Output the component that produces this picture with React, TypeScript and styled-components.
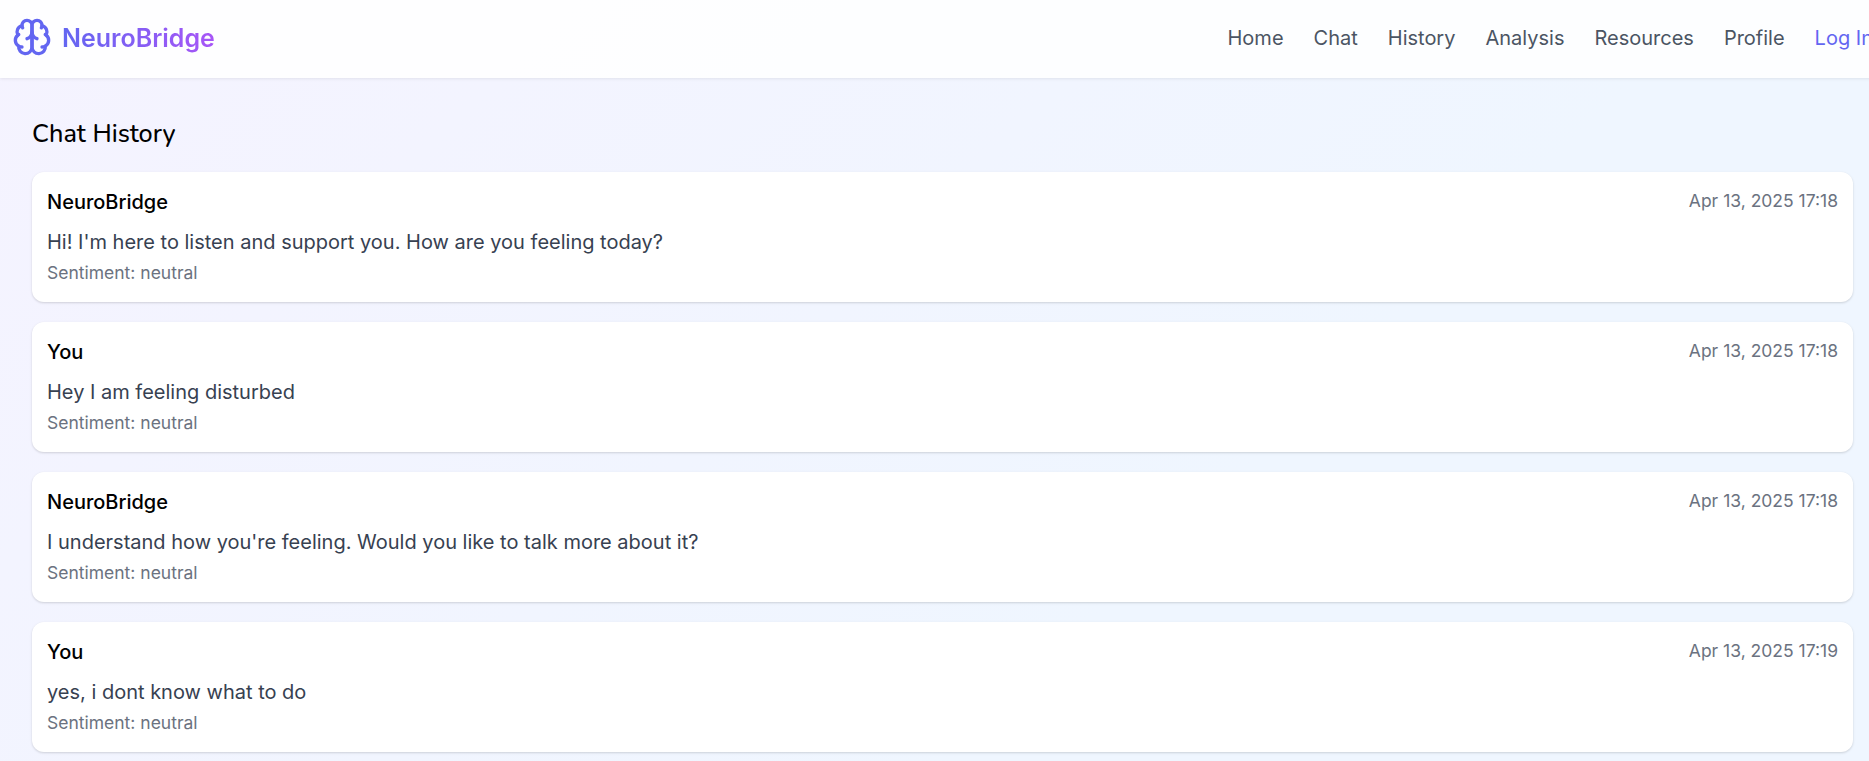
import React from "react";
import styled, { createGlobalStyle } from "styled-components";
import { LuBrain } from "react-icons/lu";

const GlobalStyle = createGlobalStyle`
  html, body {
    margin: 0;
    padding: 0;
    overflow: hidden;
    height: 761px;
  }
  * { box-sizing: border-box; }
`;

const Page = styled.div`
  width: 1885px;
  height: 761px;
  overflow: hidden;
  font-family: "Inter", "Liberation Sans", sans-serif;
  background: linear-gradient(135deg, #f5f3ff 0%, #eff6ff 65%);
`;

const Navbar = styled.nav`
  height: 78px;
  padding: 0 12px 2px 12px;
  display: flex;
  align-items: center;
  justify-content: space-between;
  background: rgba(255, 255, 255, 0.85);
  box-shadow: 0 1px 3px rgba(0, 0, 0, 0.08);
`;

const Brand = styled.div`
  display: flex;
  align-items: center;
  gap: 10px;
  color: #6366f1;
`;

const BrandIcon = styled(LuBrain)`
  width: 40px;
  height: 40px;
  margin-bottom: 2px;
`;

const BrandName = styled.span`
  font-size: 25px;
  line-height: 32px;
  font-weight: 600;
  background: linear-gradient(90deg, #6366f1, #a855f7);
  -webkit-background-clip: text;
  background-clip: text;
  color: transparent;
`;

const NavLinks = styled.div`
  display: flex;
  align-items: center;
  gap: 30px;
`;

const NavLink = styled.a<{ $accent?: boolean }>`
  font-size: 20px;
  line-height: 28px;
  color: ${(p) => (p.$accent ? "#6366f1" : "#4b5563")};
`;

const Main = styled.main`
  padding: 40px 32px 0;
`;

const Title = styled.h1`
  margin: 0 0 22px;
  font-family: "Nunito", "Lato", "Noto Sans", sans-serif;
  font-size: 25.2px;
  line-height: 32px;
  font-weight: 500;
  color: #000;
`;

const List = styled.div`
  display: flex;
  flex-direction: column;
  gap: 20px;
`;

const Card = styled.article`
  height: 130px;
  padding: 16px 15px;
  background: #fff;
  border-radius: 12px;
  box-shadow: 0 1px 3px rgba(0, 0, 0, 0.1), 0 1px 2px rgba(0, 0, 0, 0.06);
`;

const CardHead = styled.div`
  display: flex;
  align-items: flex-start;
  justify-content: space-between;
  margin-bottom: 11px;
`;

const Sender = styled.span`
  font-size: 20px;
  line-height: 28px;
  font-weight: 500;
  color: #000;
`;

const Time = styled.span`
  margin-top: 1px;
  font-size: 17.5px;
  line-height: 24px;
  color: #6b7280;
`;

const Body = styled.p`
  margin: 0 0 5px;
  font-size: 20px;
  line-height: 30px;
  color: #374151;
`;

const Sentiment = styled.p`
  margin: 0;
  font-size: 17.5px;
  line-height: 22px;
  color: #6b7280;
`;

const links = ["Home", "Chat", "History", "Analysis", "Resources", "Profile"];

const messages = [
  { who: "NeuroBridge", time: "Apr 13, 2025 17:18", text: "Hi! I'm here to listen and support you. How are you feeling today?" },
  { who: "You", time: "Apr 13, 2025 17:18", text: "Hey I am feeling disturbed" },
  { who: "NeuroBridge", time: "Apr 13, 2025 17:18", text: "I understand how you're feeling. Would you like to talk more about it?" },
  { who: "You", time: "Apr 13, 2025 17:19", text: "yes, i dont know what to do" },
];

export default function App() {
  return (
    <Page>
      <GlobalStyle />
      <Navbar>
        <Brand>
          <BrandIcon />
          <BrandName>NeuroBridge</BrandName>
        </Brand>
        <NavLinks>
          {links.map((l) => (
            <NavLink key={l}>{l}</NavLink>
          ))}
          <NavLink $accent>Log In</NavLink>
        </NavLinks>
      </Navbar>
      <Main>
        <Title>Chat History</Title>
        <List>
          {messages.map((m, i) => (
            <Card key={i}>
              <CardHead>
                <Sender>{m.who}</Sender>
                <Time>{m.time}</Time>
              </CardHead>
              <Body>{m.text}</Body>
              <Sentiment>Sentiment: neutral</Sentiment>
            </Card>
          ))}
        </List>
      </Main>
    </Page>
  );
}
